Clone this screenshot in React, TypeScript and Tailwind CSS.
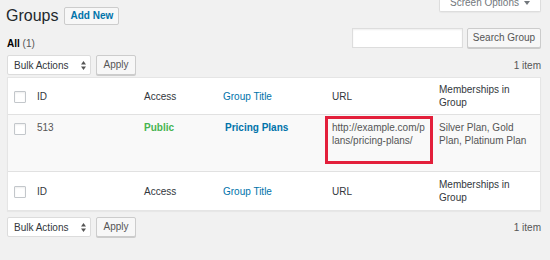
import React from 'react'

const cols = 'grid grid-cols-[22px_107px_79px_109px_107px_108px]'

function Checkbox(): React.ReactElement {
  return (
    <span className="block w-[12px] h-[12px] bg-white border border-[#c3c7cb] rounded-[1px] shadow-[inset_0_1px_2px_rgba(0,0,0,0.07)]" />
  )
}

function SelectArrows(): React.ReactElement {
  return (
    <svg width="5" height="9" viewBox="0 0 5 9" aria-hidden="true">
      <path d="M2.5 0 L5 3.4 L0 3.4 Z" fill="#555" />
      <path d="M2.5 9 L5 5.6 L0 5.6 Z" fill="#555" />
    </svg>
  )
}

function BulkRow({ top }: { top: boolean }): React.ReactElement {
  return (
    <div className={`flex items-center justify-between ${top ? 'mt-[7px]' : 'mt-[6px]'}`}>
      <div className="flex items-center gap-[5px]">
        <div className="w-[84px] h-[20px] bg-white border border-[#dcdcdc] rounded-[2px] flex items-center justify-between pl-[6px] pr-[4px] text-[#32373c]">
          <span>Bulk Actions</span>
          <SelectArrows />
        </div>
        <button
          type="button"
          className="w-[40px] h-[20px] bg-[#f7f7f7] border border-[#cccccc] rounded-[2px] shadow-[0_1px_0_#cccccc] text-[#555] leading-none"
        >
          Apply
        </button>
      </div>
      <span className="text-[#555]">1 item</span>
    </div>
  )
}

function HeadRow({ footer }: { footer: boolean }): React.ReactElement {
  return (
    <div className={`${cols} ${footer ? 'h-[39px] border-t border-[#e1e1e1]' : 'h-[37px] border-b border-[#e1e1e1]'} items-center text-[#32373c]`}>
      <div className="pl-[6px] pt-[1px]"><Checkbox /></div>
      <div className="pl-[7px]">ID</div>
      <div className="pl-[7px]">Access</div>
      <div className="pl-[7px] text-[#0073aa]">Group Title</div>
      <div className="pl-[7px]">URL</div>
      <div className="pl-[7px] pr-[6px]">Memberships in Group</div>
    </div>
  )
}

export default function App(): React.ReactElement {
  return (
    <div className="w-[550px] h-[260px] overflow-hidden bg-[#f1f1f1] pl-[7px] pr-[9px] font-['Liberation_Sans',Arial,sans-serif] text-[10px] leading-[13px] text-[#444]">
      {/* title + screen options */}
      <div className="flex items-start justify-between h-[28px]">
        <div className="flex items-center gap-[6px] pt-[7px] -ml-[1px]">
          <h1 className="text-[16px] leading-[18px] text-[#23282d] font-normal">Groups</h1>
          <button
            type="button"
            className="h-[18px] px-[5px] bg-[#f7f7f7] border border-[#cccccc] rounded-[2px] text-[#0073aa] font-bold leading-none"
          >
            Add New
          </button>
        </div>
        <div className="w-[102px] h-[12px] overflow-hidden bg-white border border-t-0 border-[#dddddd] rounded-b-[2px] shadow-[0_1px_1px_rgba(0,0,0,0.04)]">
          <div className="flex items-center justify-center gap-[5px] -mt-[4px] text-[#72777c]">
            <span>Screen Options</span>
            <svg width="6" height="4" viewBox="0 0 6 4" aria-hidden="true">
              <path d="M0 0 L6 0 L3 4 Z" fill="#72777c" />
            </svg>
          </div>
        </div>
      </div>

      {/* views + search */}
      <div className="flex items-start justify-between h-[20px]">
        <div className="pt-[9px] text-[#555]">
          <span className="font-bold text-[#000]">All</span> (1)
        </div>
        <div className="flex items-center gap-[4px]">
          <div className="w-[111px] h-[20px] bg-white border border-[#dddddd] shadow-[inset_0_1px_2px_rgba(0,0,0,0.07)]" />
          <button
            type="button"
            className="w-[74px] h-[20px] bg-[#f7f7f7] border border-[#cccccc] rounded-[2px] shadow-[0_1px_0_#cccccc] text-[#555] leading-none"
          >
            Search Group
          </button>
        </div>
      </div>

      <BulkRow top />

      {/* list table */}
      <div className="mt-[2px] w-[534px] bg-white border border-[#e5e5e5] shadow-[0_1px_1px_rgba(0,0,0,0.04)]">
        <HeadRow footer={false} />
        <div className={`${cols} h-[56px] bg-[#f9f9f9] items-start`}>
          <div className="pl-[6px] pt-[8px]"><Checkbox /></div>
          <div className="pl-[7px] pt-[6px] text-[#555]">513</div>
          <div className="pl-[7px] pt-[6px] font-bold text-[#46b450]">Public</div>
          <div className="pl-[9px] pt-[6px] font-bold text-[#0073aa]">Pricing Plans</div>
          <div className="pt-[1px]">
            <div className="w-[108px] h-[48px] border-[3px] border-[#e31f3b] pl-[4px] pt-[2px] text-[#555]">
              <div className="w-[95px] break-all">http://example.com/plans/pricing-plans/</div>
            </div>
          </div>
          <div className="pl-[7px] pr-[6px] pt-[6px] text-[#555]">Silver Plan, Gold Plan, Platinum Plan</div>
        </div>
        <HeadRow footer />
      </div>

      <BulkRow top={false} />
    </div>
  )
}
